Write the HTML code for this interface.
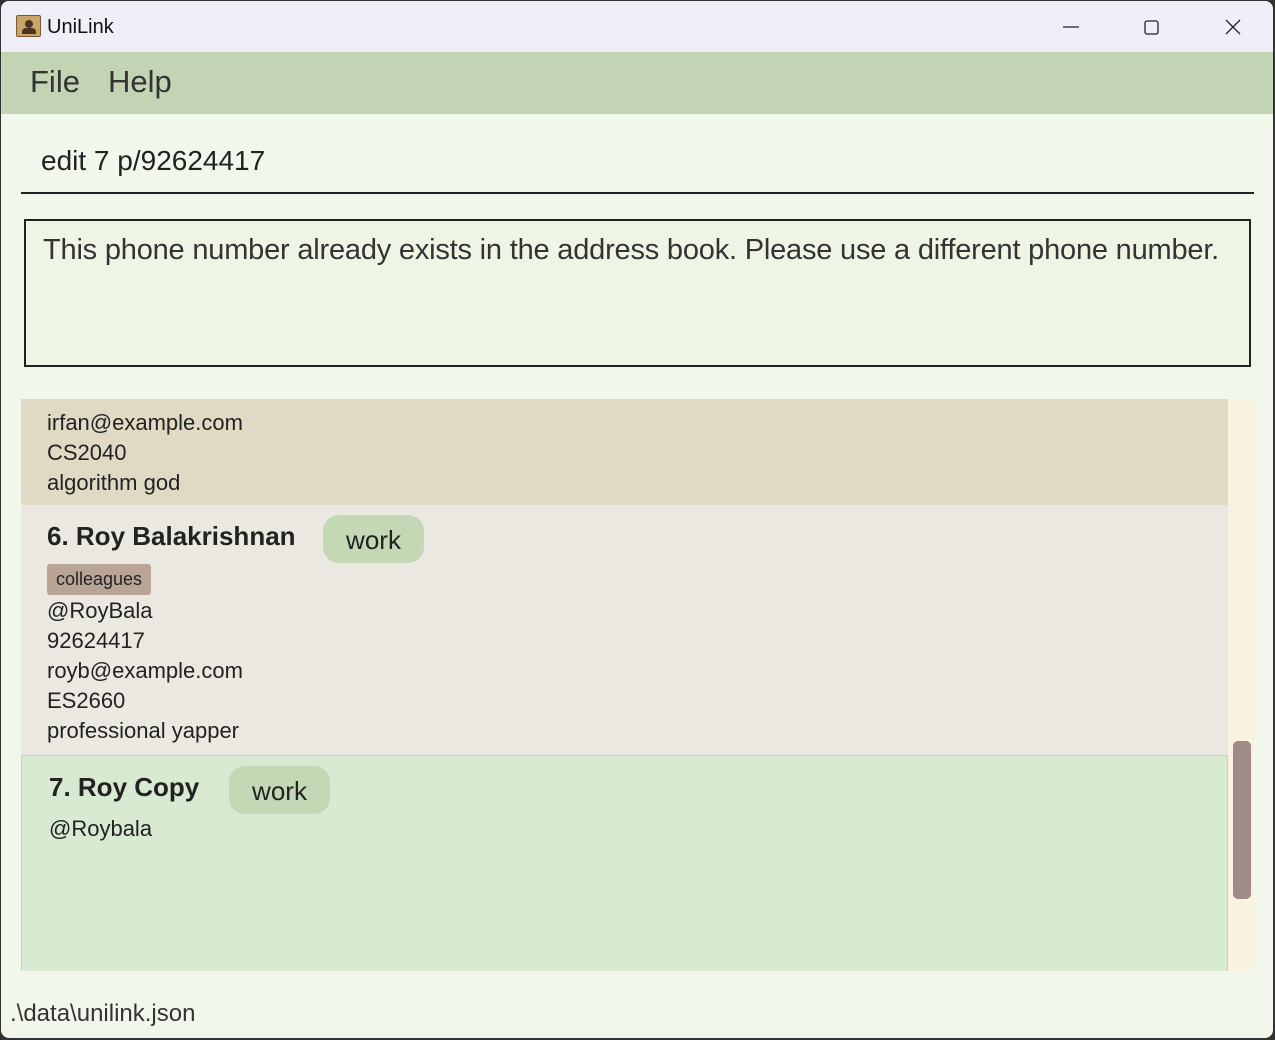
<!DOCTYPE html>
<html><head><style>
*{margin:0;padding:0;box-sizing:border-box}
body{width:1275px;height:1040px;background:#333;font-family:"Liberation Sans",sans-serif;position:relative;overflow:hidden}
.win{position:absolute;left:1px;top:1px;width:1272px;height:1037px;background:#f2f7ec;border-radius:8px 8px 8px 8px;overflow:hidden}
.title{position:absolute;left:0;top:0;width:100%;height:51px;background:#f0eef6}
.menu{position:absolute;left:0;top:51px;width:100%;height:62px;background:#c2d4b3}
.abs{position:absolute;white-space:nowrap}
</style></head><body>
<div class="win">
<div class="title">
<div class="abs" style="left:15px;top:14px;width:25px;height:22px;background:#c9a468;border:1px solid #7a5a30;border-radius:2px"><div style="position:absolute;left:8px;top:4px;width:8px;height:8px;border-radius:50%;background:#4a3520"></div><div style="position:absolute;left:5px;top:12px;width:14px;height:6px;background:#4a3520;border-radius:4px 4px 0 0"></div></div>
<div class="abs" style="left:46px;top:15px;font-size:20px;color:#111">UniLink</div>
<svg class="abs" style="left:1060px;top:17px" width="190" height="20"><line x1="2" y1="9" x2="18" y2="9" stroke="#222" stroke-width="1.2"/><rect x="84" y="3" width="13" height="13" rx="2" fill="none" stroke="#222" stroke-width="1.3"/><path d="M165 2 L179 16 M179 2 L165 16" stroke="#222" stroke-width="1.3"/></svg>
</div>
<div class="menu">
<div class="abs" style="left:29px;top:12px;font-size:31px;color:#333">File</div>
<div class="abs" style="left:107px;top:12px;font-size:31px;color:#333">Help</div>
</div>
<div class="abs" style="left:40px;top:144px;font-size:28px;color:#222">edit 7 p/92624417</div>
<div class="abs" style="left:20px;top:191px;width:1233px;height:2px;background:#222"></div>
<div class="abs" style="left:23px;top:218px;width:1227px;height:148px;border:2px solid #222;background:#eff5e5"></div>
<div class="abs" style="left:42px;top:233px;font-size:29px;color:#333;letter-spacing:-0.2px">This phone number already exists in the address book. Please use a different phone number.</div>
<div class="abs" style="left:20px;top:398px;width:1207px;height:106px;background:#e0dac4"></div>
<div class="abs" style="left:46px;top:407px;font-size:22px;line-height:30px;color:#222">irfan@example.com<br>CS2040<br>algorithm god</div>
<div class="abs" style="left:20px;top:504px;width:1207px;height:250px;background:#ebe8e1"></div>
<div class="abs" style="left:46px;top:520px;font-size:26px;font-weight:bold;color:#222">6. Roy Balakrishnan</div>
<div class="abs" style="left:322px;top:514px;width:101px;height:48px;border-radius:16px;background:#c5d8b5;font-size:26px;color:#222;text-align:center;line-height:50px">work</div>
<div class="abs" style="left:46px;top:563px;width:104px;height:31px;border-radius:3px;background:#b8a595;font-size:18px;color:#222;text-align:center;line-height:31px">colleagues</div>
<div class="abs" style="left:46px;top:595px;font-size:22px;line-height:30px;color:#222">@RoyBala<br>92624417<br>royb@example.com<br>ES2660<br>professional yapper</div>
<div class="abs" style="left:20px;top:754px;width:1207px;height:216px;background:#d9ead3;border:1px solid #bcd3d8;border-bottom:none"></div>
<div class="abs" style="left:48px;top:771px;font-size:26px;font-weight:bold;color:#222">7. Roy Copy</div>
<div class="abs" style="left:228px;top:765px;width:101px;height:48px;border-radius:16px;background:#c5d8b5;font-size:26px;color:#222;text-align:center;line-height:50px">work</div>
<div class="abs" style="left:48px;top:815px;font-size:22px;color:#222">@Roybala</div>
<div class="abs" style="left:1227px;top:398px;width:26px;height:572px;background:#faf2e0"></div>
<div class="abs" style="left:1232px;top:740px;width:18px;height:158px;border-radius:5px;background:#a08a88"></div>
<div class="abs" style="left:9px;top:999px;font-size:24px;color:#333">.\data\unilink.json</div>
</div>
</body></html>
